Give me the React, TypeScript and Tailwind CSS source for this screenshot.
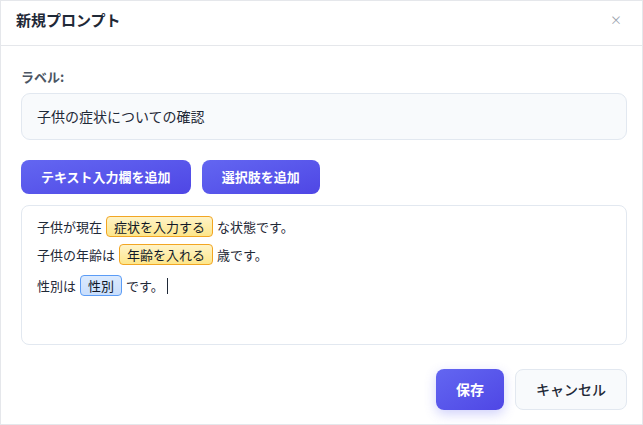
import React from "react";

const font = { fontFamily: '"Noto Sans CJK JP", "Noto Sans", sans-serif' };

function Chip({ children, color }: { children: React.ReactNode; color: "amber" | "blue" }) {
  const cls =
    color === "amber"
      ? "bg-gradient-to-b from-[#fef3c7] to-[#fde68a] border-[#f2a623] "
      : "bg-gradient-to-b from-[#dbeafe] to-[#c9defc] border-[#5b9cf6] ";
  return (
    <span className={cls + "inline-flex items-center h-[21px] px-[7px] mx-[4px] border rounded-[4px] text-[13px] leading-none text-[#111827]"}>
      {children}
    </span>
  );
}

export default function App() {
  return (
    <div className="w-[643px] h-[425px] bg-white border border-[#e5e7eb] flex flex-col text-[#1f2937]" style={font}>
      <div className="h-[45px] border-b border-[#e5e7eb] flex items-start justify-between pl-[15px] pr-[20px] pt-[9px] shrink-0">
        <div className="text-[15px] font-bold leading-[20px] text-[#1f2937]">新規プロンプト</div>
        <div className="text-[12px] leading-[20px] text-[#9ca3af]">×</div>
      </div>
      <div className="flex flex-col pl-5 pr-[15px]">
        <div className="pt-[21px] text-[13px] font-bold leading-[20px] text-[#4b5563]">ラベル:</div>
        <div className="mt-[6px] h-[47px] rounded-[9px] border border-[#e2e8f0] bg-[#f8fafc] flex items-center px-[15px] text-[14px] text-[#1f2937]">
          子供の症状についての確認
        </div>
        <div className="mt-5 flex gap-[11px]">
          <button className="h-[34px] px-5 rounded-[8px] bg-gradient-to-br from-[#6366f1] to-[#4f46e5] text-white text-[13px] font-bold">
            テキスト入力欄を追加
          </button>
          <button className="h-[34px] px-5 rounded-[8px] bg-gradient-to-br from-[#6366f1] to-[#4f46e5] text-white text-[13px] font-bold">
            選択肢を追加
          </button>
        </div>
        <div className="mt-[11px] h-[140px] rounded-[8px] border border-[#e2e8f0] bg-white px-[15px] pt-[10px] text-[13px] text-[#1f2937]">
          <div className="flex items-center h-[21px]">
            子供が現在<Chip color="amber">症状を入力する</Chip>な状態です。
          </div>
          <div className="flex items-center h-[21px] mt-[7px]">
            子供の年齢は<Chip color="amber">年齢を入れる</Chip>歳です。
          </div>
          <div className="flex items-center h-[21px] mt-[10px]">
            性別は<Chip color="blue">性別</Chip>です。
            <span className="ml-[3px] inline-block w-px h-[16px] bg-[#1f2937]" />
          </div>
        </div>
        <div className="mt-6 flex justify-end gap-[11px]">
          <button className="h-[41px] px-5 rounded-[8px] bg-gradient-to-br from-[#6366f1] to-[#4f46e5] text-white text-[14px] font-bold shadow-[0_4px_12px_rgba(99,102,241,0.3)]">
            保存
          </button>
          <button className="h-[41px] px-5 rounded-[8px] border border-[#e2e8f0] bg-[#f8fafc] text-[#1f2937] text-[14px] font-medium">
            キャンセル
          </button>
        </div>
      </div>
    </div>
  );
}
